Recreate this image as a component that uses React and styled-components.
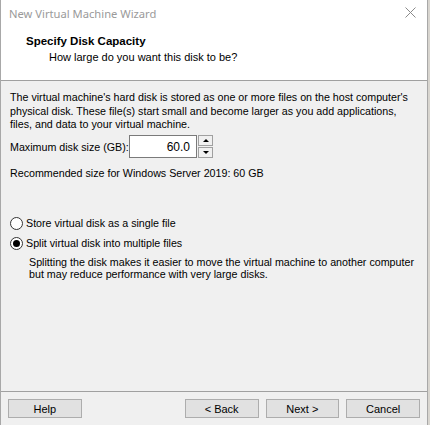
import React from "react";
import styled, { createGlobalStyle } from "styled-components";

const Global = createGlobalStyle`
  html, body { margin: 0; padding: 0; background: #d8d5cf; }
  body { width: 430px; height: 425px; overflow: hidden; }
  * { box-sizing: border-box; }
`;

const Window = styled.div`
  width: 428px;
  height: 425px;
  display: flex;
  flex-direction: column;
  background: #f0f0f0;
  border-left: 1px solid #a8a8a8;
  border-right: 1px solid #a8a8a8;
  font-family: "Liberation Sans", Arial, sans-serif;
  font-size: 10.7px;
  color: #000;
`;

const TitleBar = styled.div`
  height: 28px;
  display: flex;
  align-items: center;
  justify-content: space-between;
  padding: 0 10px 0 8px;
  background: #fff;
`;

const TitleText = styled.span`
  font-family: "Noto Sans", "Open Sans", sans-serif;
  font-size: 11.2px;
  color: #9a9a9a;
  margin-top: -2px;
`;

const CloseIcon = styled.svg`
  width: 11px;
  height: 11px;
  margin-top: -4px;
  margin-right: 1px;
`;

const Header = styled.div`
  background: #fff;
  height: 53px;
  border-bottom: 1px solid #a0a0a0;
  padding: 5px 0 0 25px;
  display: flex;
  flex-direction: column;
`;

const HeaderTitle = styled.div`
  font-weight: bold;
  font-size: 11.5px;
  line-height: 16px;
`;

const HeaderSub = styled.div`
  padding-left: 23px;
  line-height: 16px;
  font-size: 11px;
`;

const Body = styled.div`
  flex: 1;
  padding: 10px 0 0 9px;
  display: flex;
  flex-direction: column;
  white-space: nowrap;
`;

const Para = styled.p`
  margin: 0;
  line-height: 13.5px;
`;

const SizeRow = styled.div`
  display: flex;
  align-items: center;
  margin-top: 3px;
  height: 24px;
`;

const Label = styled.span`
  flex: none;
  width: 119px;
`;

const NumberBox = styled.div`
  flex: none;
  width: 68px;
  height: 23px;
  background: #fff;
  border: 1px solid #7a7a7a;
  display: flex;
  align-items: center;
  justify-content: flex-end;
  padding-right: 6px;
  font-size: 12px;
`;

const Spinner = styled.div`
  margin-left: 1px;
  width: 15px;
  height: 23px;
  display: flex;
  flex-direction: column;
  gap: 1px;
`;

const SpinBtn = styled.div`
  flex: 1;
  background: #f0f0f0;
  border: 1px solid #a0a0a0;
  display: flex;
  align-items: center;
  justify-content: center;
`;

const Arrow = styled.div`
  width: 0;
  height: 0;
  border-left: 3px solid transparent;
  border-right: 3px solid transparent;
  ${(p) =>
    p.$up ? "border-bottom: 3px solid #000;" : "border-top: 3px solid #000;"}
`;

const Recommended = styled.div`
  margin-top: 7px;
  line-height: 14px;
`;

const Options = styled.div`
  margin-top: 37px;
  display: flex;
  flex-direction: column;
  gap: 7px;
`;

const RadioRow = styled.div`
  display: flex;
  align-items: center;
  gap: 3px;
  height: 13px;
`;

const RadioCircle = styled.span`
  width: 13px;
  height: 13px;
  border-radius: 50%;
  border: 1px solid #333;
  background: #fff;
  display: flex;
  align-items: center;
  justify-content: center;
  &::after {
    content: "";
    width: 7px;
    height: 7px;
    border-radius: 50%;
    background: ${(p) => (p.$checked ? "#000" : "transparent")};
  }
`;

const Desc = styled.p`
  margin: 6px 0 0 19px;
  line-height: 12.5px;
`;

const Footer = styled.div`
  height: 34px;
  border-top: 1px solid #a0a0a0;
  display: flex;
  align-items: flex-start;
  padding: 7px 7px 0 7px;
`;

const Button = styled.div`
  width: 74px;
  height: 19px;
  background: #e1e1e1;
  border: 1px solid #adadad;
  display: flex;
  align-items: center;
  justify-content: center;
  font-size: 11px;
  margin-left: ${(p) => p.$ml || 0}px;
`;

export default function App() {
  return (
    <>
      <Global />
      <Window>
        <TitleBar>
          <TitleText>New Virtual Machine Wizard</TitleText>
          <CloseIcon viewBox="0 0 11 11">
            <path d="M0.5 0.5 L10.5 10.5 M10.5 0.5 L0.5 10.5" stroke="#8a8a8a" strokeWidth="1" fill="none" />
          </CloseIcon>
        </TitleBar>
        <Header>
          <HeaderTitle>Specify Disk Capacity</HeaderTitle>
          <HeaderSub>How large do you want this disk to be?</HeaderSub>
        </Header>
        <Body>
          <Para>
            The virtual machine's hard disk is stored as one or more files on the host computer's
            <br />
            physical disk. These file(s) start small and become larger as you add applications,
            <br />
            files, and data to your virtual machine.
          </Para>
          <SizeRow>
            <Label>Maximum disk size (GB):</Label>
            <NumberBox>60.0</NumberBox>
            <Spinner>
              <SpinBtn><Arrow $up /></SpinBtn>
              <SpinBtn><Arrow /></SpinBtn>
            </Spinner>
          </SizeRow>
          <Recommended>Recommended size for Windows Server 2019: 60 GB</Recommended>
          <Options>
            <RadioRow>
              <RadioCircle />
              <span>Store virtual disk as a single file</span>
            </RadioRow>
            <RadioRow>
              <RadioCircle $checked />
              <span>Split virtual disk into multiple files</span>
            </RadioRow>
          </Options>
          <Desc>
            Splitting the disk makes it easier to move the virtual machine to another computer
            <br />
            but may reduce performance with very large disks.
          </Desc>
        </Body>
        <Footer>
          <Button>Help</Button>
          <Button $ml={103}>&lt; Back</Button>
          <Button $ml={7}>Next &gt;</Button>
          <Button $ml={7}>Cancel</Button>
        </Footer>
      </Window>
    </>
  );
}
